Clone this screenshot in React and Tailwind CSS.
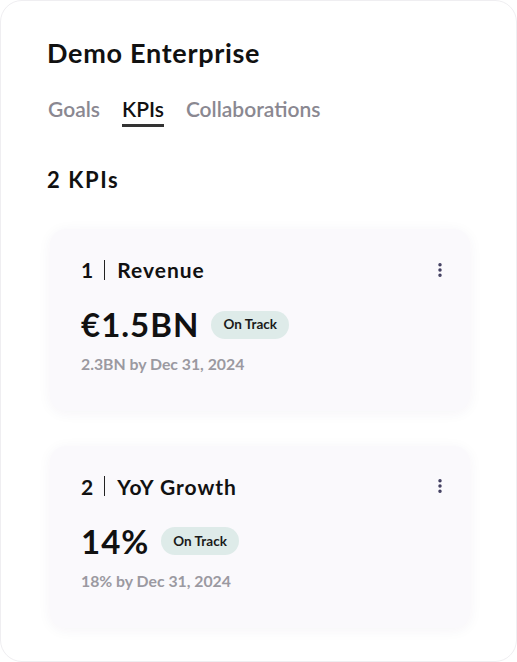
import { EllipsisVertical } from "lucide-react";

const kpis = [
  { id: 1, name: "Revenue", value: "€1.5BN", target: "2.3BN by Dec 31, 2024" },
  { id: 2, name: "YoY Growth", value: "14%", target: "18% by Dec 31, 2024" },
];

function KpiCard({ kpi }) {
  return (
    <div className="w-[420px] rounded-[16px] bg-[#faf9fc] pl-[31px] pr-[21px] pt-[30px] pb-[39px] shadow-[0_2px_14px_rgba(60,40,90,0.05)]">
      <div className="flex items-center justify-between">
        <div className="flex items-center text-[21px] font-bold leading-none tracking-[1px] text-[#111]">
          <span>{kpi.id}</span>
          <span className="ml-[10px] mr-[12px] h-[20px] w-px bg-[#222]" />
          <span>{kpi.name}</span>
        </div>
        <EllipsisVertical className="h-[18px] w-[18px] text-[#3d3a5c]" strokeWidth={2.6} />
      </div>
      <div className="mt-[28px] flex items-center gap-[12px]">
        <span className="text-[33px] font-bold leading-none tracking-[1px] text-[#111]">{kpi.value}</span>
        <span className="flex h-[28px] items-center rounded-full bg-[#deebe9] px-[12px] text-[13.5px] font-bold text-[#1a1a1a]">
          On Track
        </span>
      </div>
      <div className="mt-[15px] text-[15.8px] font-bold leading-none text-[#9b99a1]">{kpi.target}</div>
    </div>
  );
}

export default function App() {
  return (
    <div
      className="h-[662px] w-[517px] overflow-hidden rounded-[22px] border border-[#efeef1] bg-white pl-[46px] pt-[38px]"
      style={{ fontFamily: "Lato, 'Open Sans', sans-serif" }}
    >
      <h1 className="text-[27px] font-bold leading-none tracking-[0.7px] text-[#111]">Demo Enterprise</h1>

      {/* tabs */}
      <div className="mt-[32px] flex gap-[22px] pl-[1px] text-[21px] font-semibold leading-none">
        <span className="pb-[6px] text-[#8a8891]">Goals</span>
        <span className="border-b-[3px] border-[#333] pb-[5px] text-[#111]">KPIs</span>
        <span className="pb-[6px] text-[#8a8891]">Collaborations</span>
      </div>

      <h2 className="mt-[42px] text-[22px] font-bold leading-none tracking-[1.6px] text-[#111]">2 KPIs</h2>

      <div className="mt-[38px] flex flex-col gap-[35px] pl-[3px]">
        {kpis.map((k) => (
          <KpiCard key={k.id} kpi={k} />
        ))}
      </div>
    </div>
  );
}
